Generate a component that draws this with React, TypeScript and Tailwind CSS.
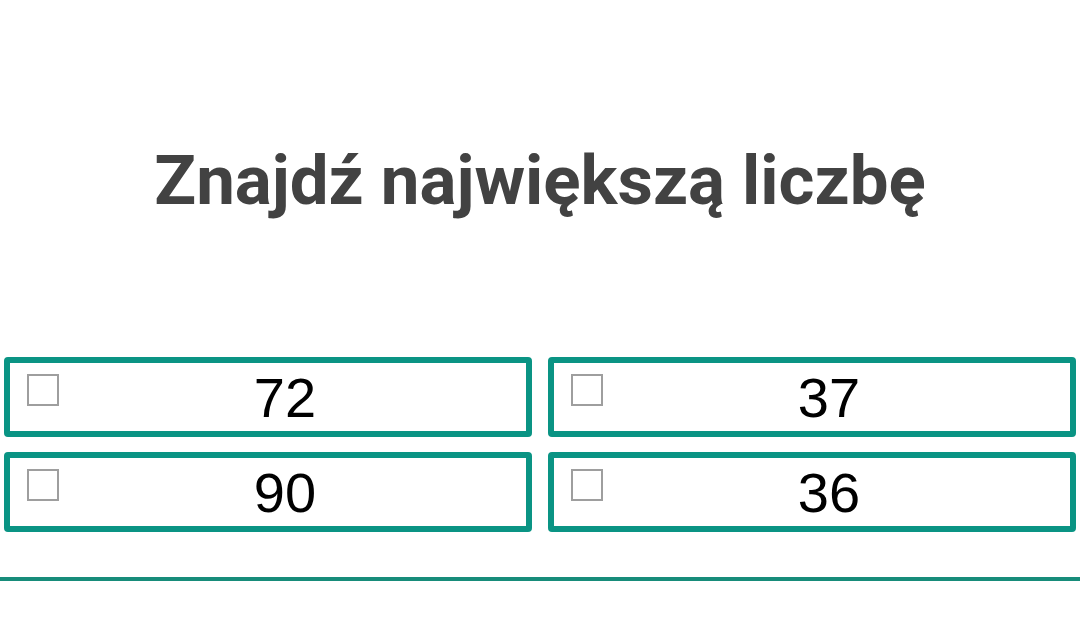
import React, { useState } from 'react';

const numbers = [72, 37, 90, 36];

const Option = ({ value, checked, onToggle }: { value: number; checked: boolean; onToggle: () => void }) => (
  <label className="flex h-[80px] items-start rounded-[4px] border-[6px] border-[#0a9484] bg-white cursor-pointer">
    <input
      type="checkbox"
      checked={checked}
      onChange={onToggle}
      className="mt-[11px] ml-[17px] h-[32px] w-[32px] shrink-0 appearance-none border-2 border-[#9e9e9e] bg-white"
    />
    <span className="mr-[15px] flex-1 pt-[5px] text-center text-[56px] leading-[60px] text-black" style={{ fontFamily: '"Liberation Sans", Arial, sans-serif' }}>
      {value}
    </span>
  </label>
);

export default function App() {
  const [picked, setPicked] = useState<number[]>([]);

  const toggle = (n: number) =>
    setPicked((p) => (p.includes(n) ? p.filter((x) => x !== n) : [...p, n]));

  return (
    <div className="h-[630px] w-[1080px] overflow-hidden bg-white">
      <h1
        className="pt-[139px] text-center text-[69px] font-bold leading-[84px] text-[#424242]"
        style={{ fontFamily: 'Roboto, "Liberation Sans", sans-serif' }}
      >
        Znajdź największą liczbę
      </h1>
      <div className="mx-[4px] mt-[134px] grid grid-cols-2 gap-x-[16px] gap-y-[15px]">
        {numbers.map((n) => (
          <Option key={n} value={n} checked={picked.includes(n)} onToggle={() => toggle(n)} />
        ))}
      </div>
      <div className="mt-[45px] h-[4px] w-full bg-[#178c7a]" />
    </div>
  );
}
